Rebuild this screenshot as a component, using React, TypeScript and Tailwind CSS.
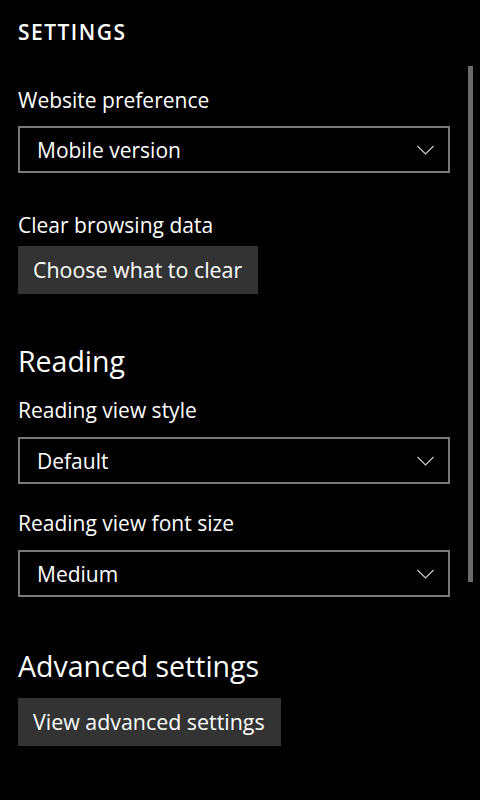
import React from "react";

function Chevron() {
  return (
    <svg width="17" height="10" viewBox="0 0 17 10" className="shrink-0">
      <path d="M0.5 1 L8.5 9 L16.5 1" fill="none" stroke="#cfcfcf" strokeWidth="1.1" />
    </svg>
  );
}

function Dropdown({ value }: { value: string }) {
  return (
    <div className="flex h-[47px] items-center justify-between border-2 border-[#7a7a7a] pl-[17px] pr-[14px]">
      <span className="text-[21px] leading-[28px] text-white">{value}</span>
      <Chevron />
    </div>
  );
}

function Label({ children }: { children: React.ReactNode }) {
  return <div className="text-[21px] leading-[28px] text-white">{children}</div>;
}

function Button({ children }: { children: React.ReactNode }) {
  return (
    <button className="flex h-[48px] items-center bg-[#333333] pl-[15px] pr-[16px] text-[21.4px] leading-[28px] text-white">
      {children}
    </button>
  );
}

export default function App() {
  return (
    <div
      className="relative h-[800px] w-[480px] overflow-hidden bg-black text-white"
      style={{ fontFamily: '"Open Sans", "Noto Sans", sans-serif' }}
    >
      {/* scrollbar */}
      <div className="absolute left-[468px] top-[66px] h-[516px] w-[5px] bg-[#6b6b6b]" />

      <div className="flex flex-col items-start pl-[18px] pr-[30px] pt-[18px]">
        <div className="text-[21px] font-semibold leading-[28px] tracking-[0.07em]">SETTINGS</div>

        <div className="mt-[40px]">
          <Label>Website preference</Label>
        </div>
        <div className="mt-[12px] self-stretch">
          <Dropdown value="Mobile version" />
        </div>

        <div className="mt-[38px]">
          <Label>Clear browsing data</Label>
        </div>
        <div className="mt-[7px]">
          <Button>Choose what to clear</Button>
        </div>

        <div className="mt-[47px] text-[28.5px] leading-[40px]">Reading</div>
        <div className="mt-[15px]">
          <Label>Reading view style</Label>
        </div>
        <div className="mt-[13px] self-stretch">
          <Dropdown value="Default" />
        </div>

        <div className="mt-[25px]">
          <Label>Reading view font size</Label>
        </div>
        <div className="mt-[13px] self-stretch">
          <Dropdown value="Medium" />
        </div>

        <div className="mt-[49px] text-[28.5px] leading-[40px]">Advanced settings</div>
        <div className="mt-[12px]">
          <Button>View advanced settings</Button>
        </div>
      </div>
    </div>
  );
}
